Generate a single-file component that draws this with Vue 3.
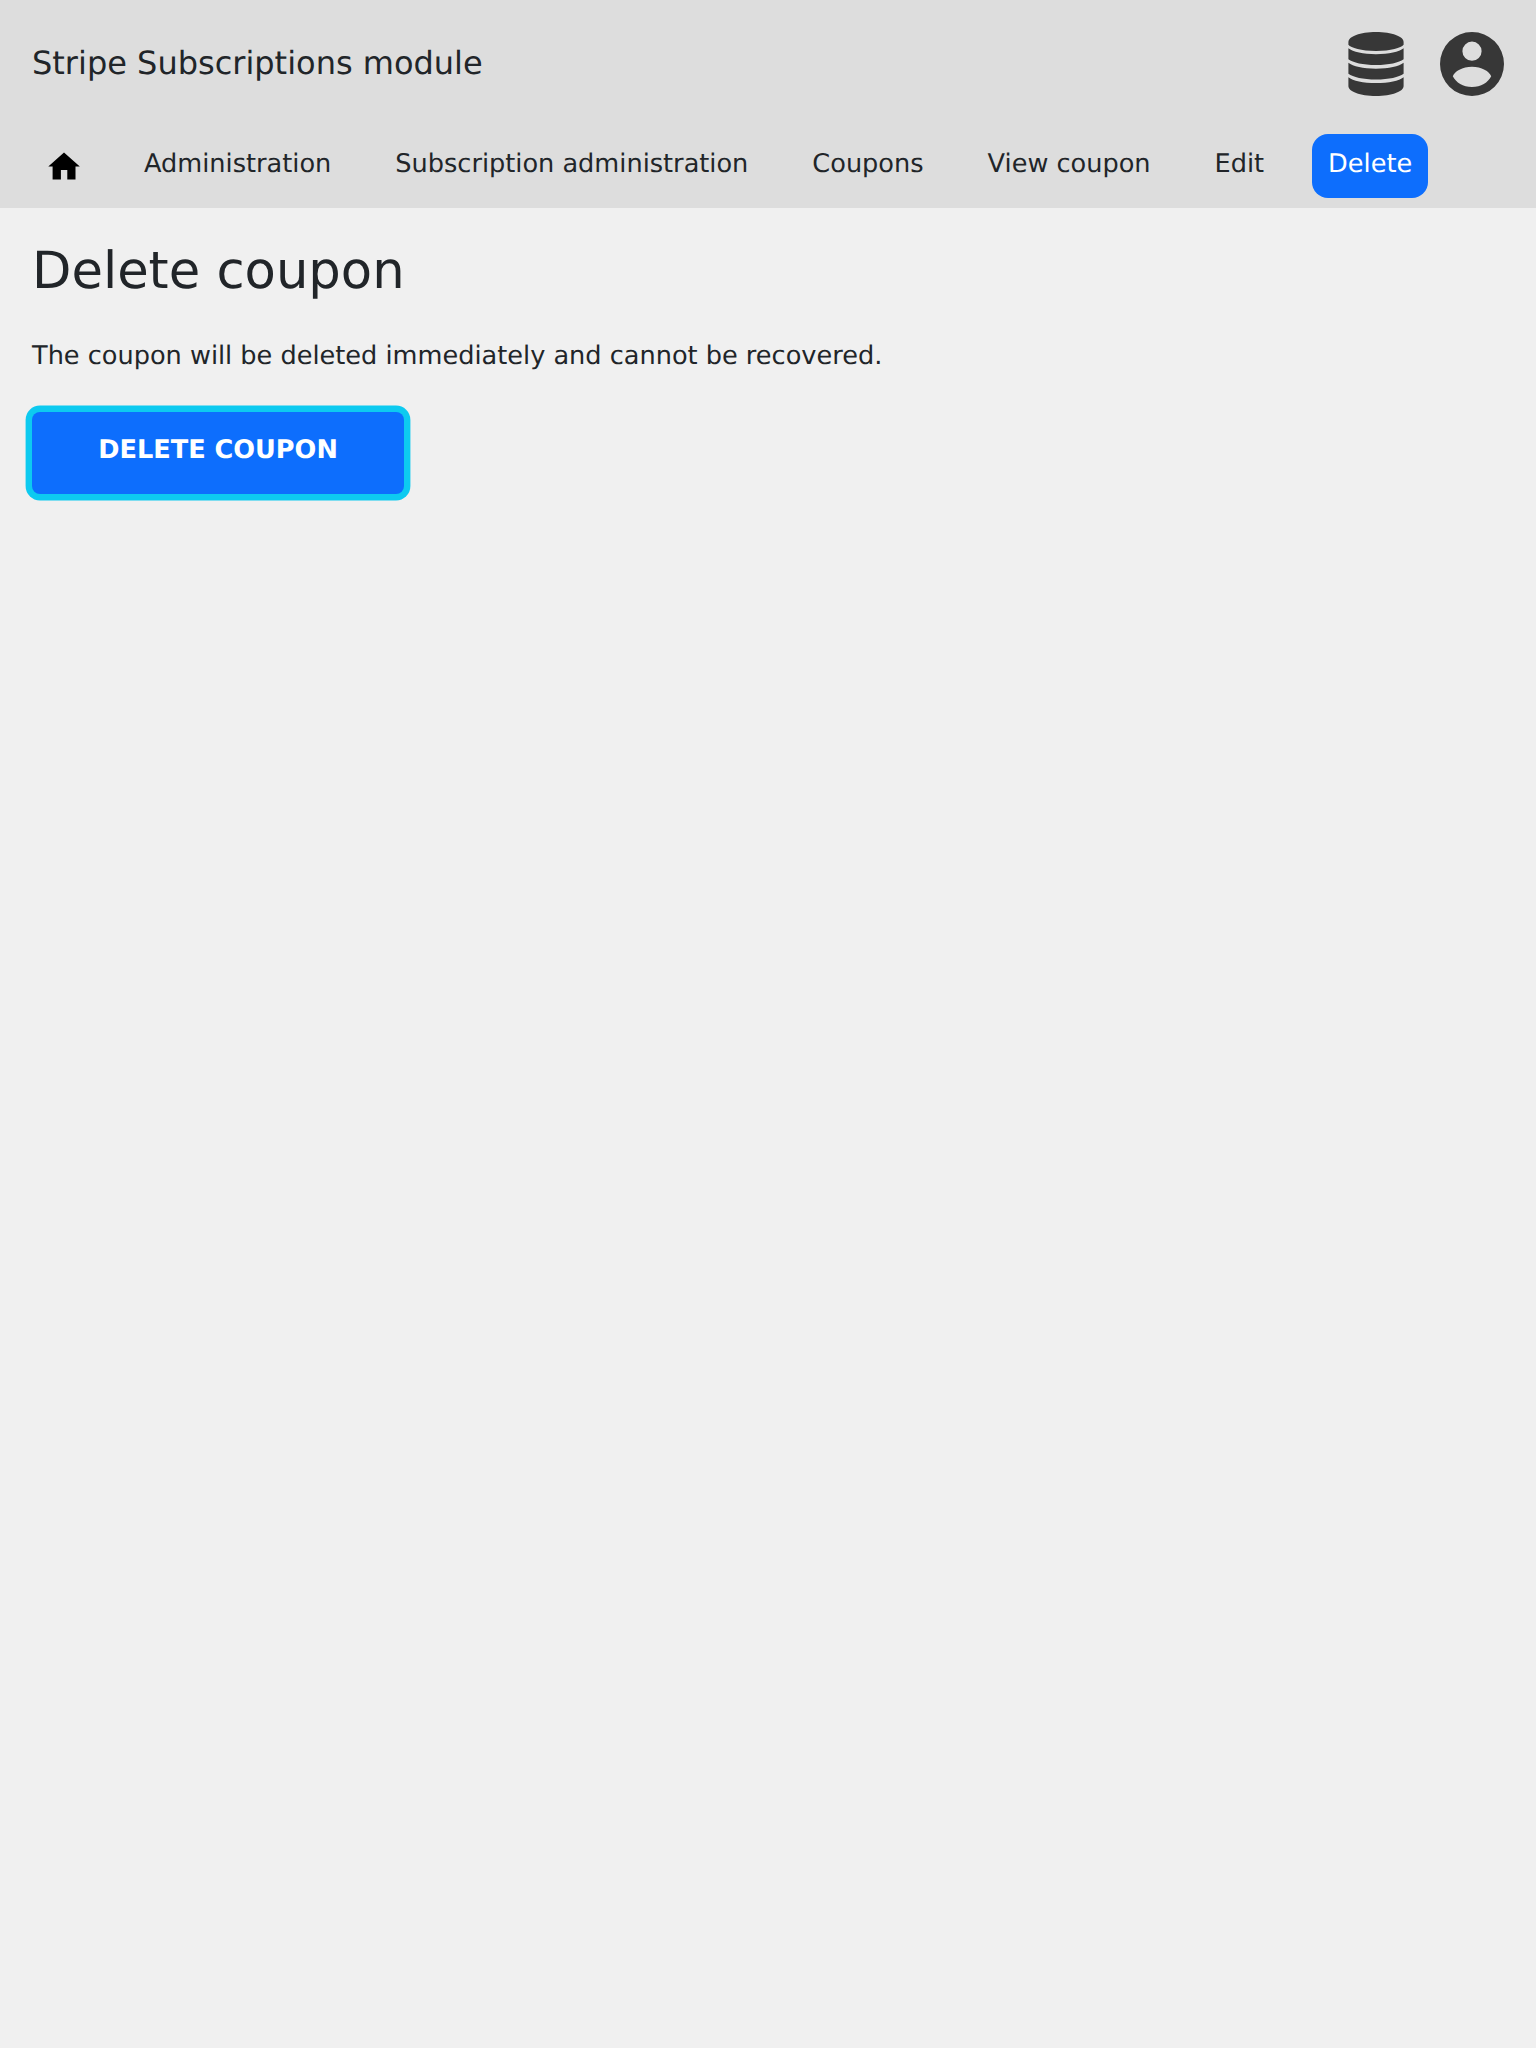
<script setup>
const links = ['Administration', 'Subscription administration', 'Coupons', 'View coupon', 'Edit', 'Delete']
const current = 'Delete'
</script>

<template>
  <div class="page">
    <header>
      <div class="top">
        <div class="title">Stripe Subscriptions module</div>
        <div class="tools">
          <svg class="database" viewBox="0 0 56 64" aria-hidden="true">
            <path d="M.4 10C.4 4.500 12 0 28 0s27.600 4.500 27.600 10v2.800C53 16 43 19 28 19S3 16 .4 12.800z" />
            <path d="M.4 16.300C5 19.800 15 22.200 28 22.200s23-2.400 27.600-5.900V27.200C51 30.600 41 33 28 33S5 30.600 .4 27.200z" />
            <path d="M.4 30.800C5 34.300 15 36.700 28 36.700s23-2.400 27.600-5.900V41.700C51 45.100 41 47.500 28 47.500S5 45.100 .4 41.700z" />
            <path d="M.4 45.200C5 48.700 15 51.100 28 51.100s23-2.400 27.600-5.900V54C55.600 59.500 44 64 28 64S.4 59.500 .4 54z" />
          </svg>
          <svg class="account" viewBox="0 0 64 64" aria-hidden="true">
            <path fill-rule="evenodd" d="M32 0a32 32 0 1 1 0 64a32 32 0 1 1 0-64zM32 9.600a9.600 9.600 0 1 0 0 19.200a9.600 9.600 0 1 0 0-19.200zM32 34.800C22.500 34.800 14.500 39.500 12.800 44.200C16 50.500 23 55 32 55S48 50.500 51.200 44.200C49.500 39.500 41.500 34.800 32 34.800z" />
          </svg>
        </div>
      </div>
      <nav>
        <a class="link home" aria-label="Home">
          <svg viewBox="0 0 32 28" aria-hidden="true">
            <path d="M16 .5L.3 14.600H4.600V27.600H12.900V18H19.300V27.600H27.500V14.600H31.800z" />
          </svg>
        </a>
        <a v-for="name in links" :key="name" class="link" :class="{ active: name === current }">{{ name }}</a>
      </nav>
    </header>
    <main>
      <h1>Delete coupon</h1>
      <p>The coupon will be deleted immediately and cannot be recovered.</p>
      <button type="button">DELETE COUPON</button>
    </main>
  </div>
</template>

<style>
body {
  background: #f0f0f0;
}
</style>

<style scoped>
.page {
  min-height: 2048px;
  background: #f0f0f0;
  color: #212529;
  font-family: "DejaVu Sans", sans-serif;
  font-size: 25.6px;
  text-rendering: geometricPrecision;
}
header {
  height: 208px;
  background: #ddd;
}
.top {
  display: flex;
  justify-content: space-between;
  height: 102px;
  padding: 32px 32px 0;
}
.top,
button {
  box-sizing: border-box;
}
.title {
  font-size: 32px;
  line-height: 62px;
}
.tools {
  display: flex;
  gap: 36px;
}
.tools svg {
  height: 64px;
  fill: #373737;
}
.database {
  width: 56px;
}
.account {
  width: 64px;
}
nav {
  display: flex;
  gap: 32px;
  padding: 32px 32px 0;
}
.link {
  height: 64px;
  padding: 0 16px;
  border-radius: 16px;
  line-height: 60px;
  white-space: nowrap;
}
.home svg {
  display: block;
  width: 32px;
  height: 28px;
  margin-top: 18px;
  fill: #000;
}
.active {
  background: #0d6efd;
  color: #fff;
}
main {
  padding: 32px;
}
h1 {
  margin: 0;
  font-size: 51.2px;
  font-weight: 400;
  line-height: 62px;
}
p {
  margin: 31px 0 33px;
  line-height: 46px;
}
button {
  display: block;
  width: 372px;
  height: 82px;
  margin: 0;
  padding: 0 0 6px;
  border: 0;
  border-radius: 8px;
  background: #0d6efd;
  box-shadow: 0 0 0 6.4px #0dcaf0;
  color: #fff;
  font: 700 25.6px "DejaVu Sans", sans-serif;
  text-rendering: inherit;
}
</style>
